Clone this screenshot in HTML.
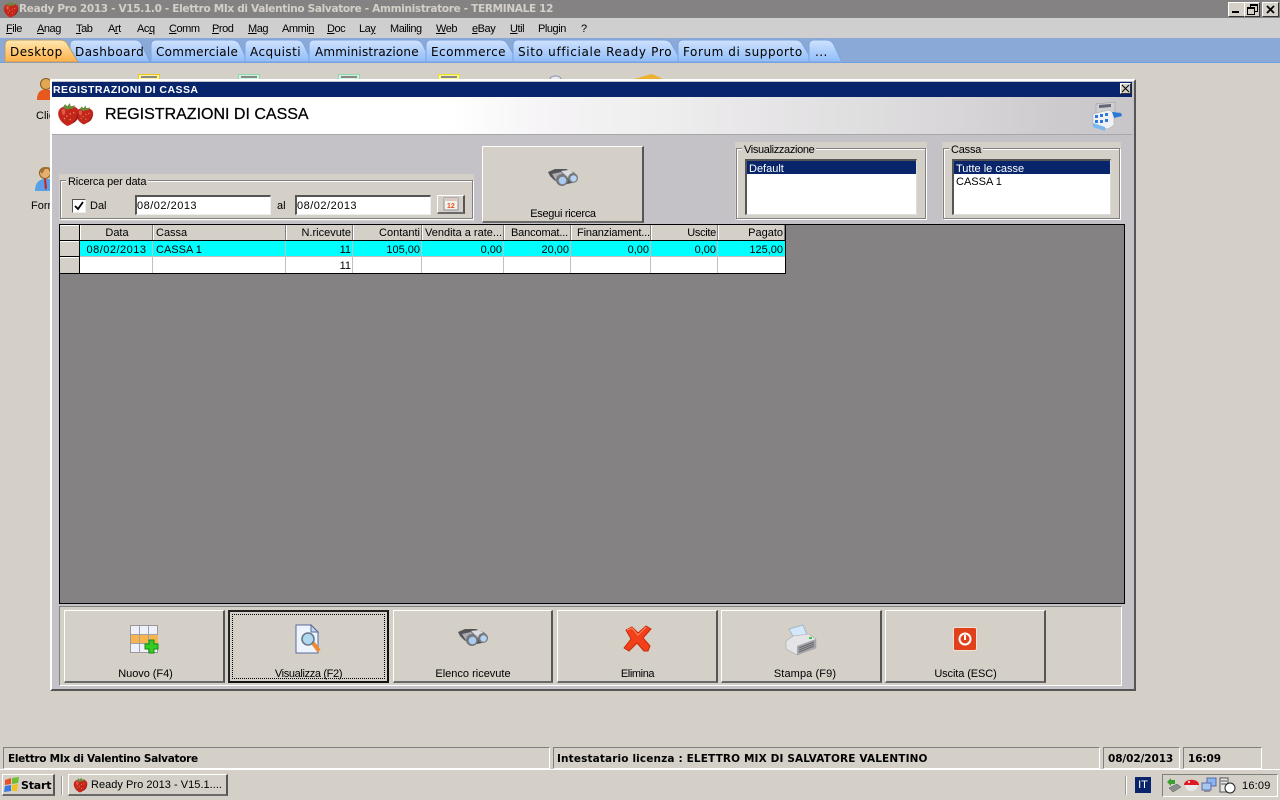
<!DOCTYPE html>
<html><head><meta charset="utf-8"><title>Ready Pro 2013</title>
<style>
html,body{margin:0;padding:0;width:1280px;height:800px;overflow:hidden;background:#d4d0c8}
body{position:relative;font-family:"Liberation Sans",sans-serif;font-size:11px;color:#000}
.a,.t{position:absolute}
.t{white-space:nowrap;line-height:13px}
.r{text-align:right}
.c{text-align:center}
.m{font-size:11px;top:23px;letter-spacing:-.45px}
.tab{font-family:"DejaVu Sans",sans-serif;font-size:12px;top:45px;letter-spacing:.45px;line-height:15px}
.btn{position:absolute;background:#d4d0c8;border-top:1px solid #fff;border-left:1px solid #fff;border-right:2px solid #555;border-bottom:2px solid #6a6a6a;box-sizing:border-box}
.etch{position:absolute;box-sizing:border-box;border:1px solid #808080;box-shadow:inset 1px 1px 0 #fff,1px 1px 0 #fff}
.hc{position:absolute;top:225px;height:15px;background:#d4d0c8;border-right:1px solid #808080;border-left:1px solid #fff;box-sizing:border-box}
.list{position:absolute;background:#fff;box-sizing:border-box;border-top:2px solid #555;border-left:2px solid #555;border-right:1px solid #ddd;border-bottom:1px solid #ddd}
.sel{position:absolute;left:0;right:0;top:0;height:13px;background:#08246b}
.inp{position:absolute;background:#fff;box-sizing:border-box;border-top:2px solid #555;border-left:2px solid #555;border-right:1px solid #eee;border-bottom:1px solid #eee;height:20px;top:195px}
.st{position:absolute;top:747px;height:22px;box-sizing:border-box;border-top:1px solid #808080;border-left:1px solid #808080;border-right:1px solid #fff;border-bottom:1px solid #fff}
.b{font-weight:bold}
u{text-decoration:underline}
svg{position:absolute;overflow:visible}
</style></head><body>

<svg width="0" height="0" style="left:0;top:0"><defs>
<g id="berry"><path d="M10 3C16 2 20 5 19 10 18 15 13 19 9 20 5 18 1 14 1 9 1 5 5 2 10 3Z" fill="#c4261c"/><path d="M4 6C6 4 8 6 7 9 6 12 4 10 4 6Z" fill="#e4574a"/><path d="M13 18C16 15 18 12 18 8 20 13 16 17 13 18Z" fill="#8e1a14"/><path d="M5 4 7 1 9 3 11 0 12 3 16 2 14 5 11 5 9 6 7 5Z" fill="#6a8a3a"/><path d="M6 13h1v1H6zM11 9h1v1h-1zM14 8h1v1h-1zM11 14h1v1h-1zM8 11h1v1H8z" fill="#e8b060"/></g>
<g id="bino"><path d="M0 4 7 1 18 1 27 5 24 15 14 17 6 12 2 8Z" fill="#555558"/><path d="M4 6 13 4 18 9 9 14Z" fill="#aeaeb2"/><path d="M13 3 21 2 27 6 20 10Z" fill="#dcdce0"/><circle cx="14" cy="12" r="6" fill="#77787c"/><circle cx="25" cy="10" r="5" fill="#77787c"/><circle cx="14.500" cy="12.500" r="3.800" fill="#a9cdf2"/><circle cx="25.500" cy="10.500" r="3.200" fill="#b4d4f4"/></g>
</defs></svg>

<!-- app title bar -->
<div class="a" style="left:0;top:0;width:1280px;height:18px;background:#858284"></div>
<svg style="left:3px;top:1px" width="16" height="17" viewBox="0 0 20 20"><use href="#berry"/></svg>
<div class="t b" style="left:19px;top:2px;color:#d4d0c8;font-family:'DejaVu Sans',sans-serif;font-size:10.500px;letter-spacing:-.32px;line-height:14px">Ready Pro 2013 - V15.1.0 - Elettro MIx di Valentino Salvatore - Amministratore - TERMINALE 12</div>
<!-- window buttons -->
<div class="a" style="left:1228px;top:2px;width:15px;height:13px;background:#d4d0c8;border:1px solid;border-color:#fff #333 #333 #fff;box-sizing:content-box"><div class="a" style="left:3px;top:8px;width:7px;height:2px;background:#000"></div></div>
<div class="a" style="left:1244px;top:2px;width:14px;height:13px;background:#d4d0c8;border:1px solid;border-color:#fff #333 #333 #fff"><div class="a" style="left:5px;top:1px;width:6px;height:5px;border:1px solid #000;border-top-width:2px"></div><div class="a" style="left:2px;top:4px;width:6px;height:5px;border:1px solid #000;border-top-width:2px;background:#d4d0c8"></div></div>
<div class="a" style="left:1262px;top:2px;width:15px;height:13px;background:#d4d0c8;border:1px solid;border-color:#fff #333 #333 #fff"><svg style="left:3px;top:2px" width="9" height="9"><path d="M1 1 8 8M8 1 1 8" stroke="#000" stroke-width="1.800"/></svg></div>

<!-- menu -->
<div class="a" style="left:0;top:18px;width:1280px;height:20px;background:#cfcfcf"></div>
<div class="t m" style="left:6px"><u>F</u>ile</div>
<div class="t m" style="left:37px"><u>A</u>nag</div>
<div class="t m" style="left:76px"><u>T</u>ab</div>
<div class="t m" style="left:108px">A<u>r</u>t</div>
<div class="t m" style="left:137px">Ac<u>q</u></div>
<div class="t m" style="left:169px"><u>C</u>omm</div>
<div class="t m" style="left:212px"><u>P</u>rod</div>
<div class="t m" style="left:248px"><u>M</u>ag</div>
<div class="t m" style="left:282px">Ammi<u>n</u></div>
<div class="t m" style="left:327px"><u>D</u>oc</div>
<div class="t m" style="left:359px">La<u>y</u></div>
<div class="t m" style="left:390px">Mailing</div>
<div class="t m" style="left:436px"><u>W</u>eb</div>
<div class="t m" style="left:472px"><u>e</u>Bay</div>
<div class="t m" style="left:510px"><u>U</u>til</div>
<div class="t m" style="left:538px">Plugin</div>
<div class="t m" style="left:581px">?</div>

<!-- tab strip -->
<div class="a" style="left:0;top:38px;width:1280px;height:25px;background:#8aa9d6"></div>
<div class="a" style="left:0;top:62px;width:1280px;height:1px;background:#6f9fe0"></div>
<svg style="left:0;top:38px" width="860" height="25">
<defs>
<linearGradient id="bl" x1="0" y1="0" x2="0" y2="1"><stop offset="0" stop-color="#cfe2fc"/><stop offset="1" stop-color="#8fbcf9"/></linearGradient>
<linearGradient id="og" x1="0" y1="0" x2="0" y2="1"><stop offset="0" stop-color="#ffe8b0"/><stop offset="1" stop-color="#ffb048"/></linearGradient>
</defs>
<g fill="url(#bl)" stroke="#7ba3dc">
<path d="M70 24V7Q70 2 75 2H135Q140 2 142 7L150 24Z"/>
<path d="M151 24V7Q151 2 156 2H232Q238 2 240 7L248 24Z"/>
<path d="M245 24V7Q245 2 250 2H297Q302 2 304 7L312 24Z"/>
<path d="M309 24V7Q309 2 314 2H415Q421 2 423 7L431 24Z"/>
<path d="M426 24V7Q426 2 431 2H500Q506 2 508 7L518 24Z"/>
<path d="M513 24V7Q513 2 518 2H664Q670 2 672 7L682 24Z"/>
<path d="M678 24V7Q678 2 683 2H795Q801 2 803 7L813 24Z"/>
<path d="M809 24V7Q809 2 814 2H826Q832 2 834 7L842 24Z"/>
</g>
<path d="M5 24V7Q5 2 10 2H60Q66 2 68 7L78 24Z" fill="url(#og)" stroke="#b99b6e"/>
</svg>
<div class="t tab" style="left:10px">Desktop</div>
<div class="t tab" style="left:75px">Dashboard</div>
<div class="t tab" style="left:156px;letter-spacing:.27px">Commerciale</div>
<div class="t tab" style="left:250px">Acquisti</div>
<div class="t tab" style="left:315px;letter-spacing:.18px">Amministrazione</div>
<div class="t tab" style="left:431px">Ecommerce</div>
<div class="t tab" style="left:518px;letter-spacing:.67px">Sito ufficiale Ready Pro</div>
<div class="t tab" style="left:683px;letter-spacing:.57px">Forum di supporto</div>
<div class="t tab" style="left:815px">...</div>

<!-- desktop icons peeking -->
<svg style="left:36px;top:76px" width="16" height="26"><circle cx="10" cy="8" r="5.500" fill="#e0a850" stroke="#8a5a20"/><path d="M1 24C1 15 6 13 10 14L16 14V24Z" fill="#e8581c"/></svg>
<div class="t" style="left:36px;top:110px">Clienti</div>
<svg style="left:35px;top:166px" width="17" height="26"><circle cx="10" cy="7" r="5.500" fill="#e8b070" stroke="#8a5a20"/><path d="M5 5C5 0 15 0 16 3L10 3 7 8Z" fill="#a07030"/><path d="M0 25C0 15 6 13 10 13L17 13V25Z" fill="#5aa0e8"/><path d="M9 13h2l1 9-2 2Z" fill="#d02020"/></svg>
<div class="t" style="left:31px;top:200px">Fornitori</div>
<div class="a" style="left:138px;top:74px;width:22px;height:5px;box-sizing:border-box;border:1px solid #e8c820;border-bottom:0;background:#fdf3a0"><div style="margin:1px 2px 0;height:2px;background:#888"></div></div>
<div class="a" style="left:238px;top:74px;width:22px;height:5px;box-sizing:border-box;border:1px solid #90d8b0;border-bottom:0;background:#d0f0e0"><div style="margin:1px 2px 0;height:2px;background:#888"></div></div>
<div class="a" style="left:338px;top:74px;width:22px;height:5px;box-sizing:border-box;border:1px solid #90d8b0;border-bottom:0;background:#d0f0e0"><div style="margin:1px 2px 0;height:2px;background:#888"></div></div>
<div class="a" style="left:438px;top:74px;width:22px;height:5px;box-sizing:border-box;border:1px solid #e8e020;border-bottom:0;background:#fdf3a0"><div style="margin:1px 2px 0;height:2px;background:#888"></div></div>
<svg style="left:549px;top:74px" width="14" height="5"><path d="M1 5C2 1 11 1 12 5" fill="#e6e6ee" stroke="#8a90a8"/></svg>
<svg style="left:634px;top:73px" width="30" height="6"><path d="M0 6 14 2 18 1 29 6Z" fill="#eeb030"/></svg>

<!-- child window -->
<div class="a" style="left:50px;top:79px;width:1086px;height:612px;background:#c4c2c6;box-sizing:border-box;border-top:2px solid #fff;border-left:2px solid #fff;border-right:2px solid #555;border-bottom:2px solid #555"></div>
<div class="a" style="left:52px;top:82px;width:1080px;height:15px;background:#08246b"></div>
<div class="t b" style="left:53px;top:84px;color:#fff;font-size:10.500px;letter-spacing:.46px">REGISTRAZIONI DI CASSA</div>
<div class="a" style="left:1120px;top:83px;width:9px;height:9px;background:#d4d0c8;border:1px solid;border-color:#fff #333 #333 #fff"><svg style="left:1px;top:1px" width="7" height="7"><path d="M0 0 7 7M7 0 0 7" stroke="#000"/></svg></div>
<div class="a" style="left:52px;top:97px;width:1080px;height:37px;background:linear-gradient(90deg,#fff 0,#fff 400px,#f5f3f5 500px,#efefef 600px,#e8e6e8 700px,#e0dfe0 800px,#d8d6d8 900px,#cdcbcd 1000px,#c8c6c8 1080px)"></div>
<div class="a" style="left:52px;top:134px;width:1080px;height:1px;background:#a8a6a8"></div>
<svg style="left:57px;top:101px" width="37" height="27" viewBox="0 0 37 27"><g transform="translate(18,4.500) scale(.95)"><use href="#berry"/></g><g transform="translate(0,2) scale(1.150)"><use href="#berry"/></g></svg>
<div class="t" style="left:105px;top:106px;font-size:16px;line-height:18px;-webkit-text-stroke:.25px #000">REGISTRAZIONI DI CASSA</div>
<svg style="left:1091px;top:100px" width="32" height="32" viewBox="0 0 32 32"><path d="M5 4 24 2V12L5 14Z" fill="#cfcfd2" stroke="#999" stroke-width=".5"/><path d="M8 5 20 4V7L8 8Z" fill="#667"/><path d="M2 14 18 10 23 13V25L17 29 2 25Z" fill="#f0f1f5" stroke="#aaa" stroke-width=".5"/><path d="M4 15h3v3H4zM9 14h3v3H9zM14 13h3v3h-3zM4 20h3v3H4zM9 20h3v3H9zM14 19h3v3h-3z" fill="#2f7ad6"/><path d="M2 23 14 27V31L2 27Z" fill="#7ab8f0"/><path d="M21 12 30 13 31 16 23 18Z" fill="#2a78d8"/></svg>

<!-- ricerca group -->
<div class="a" style="left:59px;top:174px;width:415px;height:47px;background:#d4d0c8"></div>
<div class="etch" style="left:60px;top:180px;width:413px;height:39px"></div>
<div class="t" style="left:66px;top:176px;background:#d4d0c8;padding:0 2px 0 2px;letter-spacing:-.15px">Ricerca per data</div>
<div class="a" style="left:72px;top:199px;width:12px;height:12px;background:#fff;border-top:1px solid #555;border-left:1px solid #555;border-right:1px solid #eee;border-bottom:1px solid #eee"><svg style="left:1px;top:1px" width="10" height="10"><path d="M1 5 4 8 9 1" fill="none" stroke="#000" stroke-width="1.800"/></svg></div>
<div class="t" style="left:90px;top:200px">Dal</div>
<div class="inp" style="left:135px;width:136px"></div>
<div class="t" style="left:137px;top:200px;letter-spacing:.5px">08/02/2013</div>
<div class="t" style="left:277px;top:200px">al</div>
<div class="inp" style="left:295px;width:136px"></div>
<div class="t" style="left:297px;top:200px;letter-spacing:.5px">08/02/2013</div>
<div class="btn" style="left:437px;top:195px;width:28px;height:19px"></div>
<svg style="left:443px;top:197px" width="16" height="14"><rect x="1" y="1" width="14" height="12" fill="#f4f2ec" stroke="#8a8a9a"/><rect x="1" y="1" width="14" height="3" fill="#d8c8c0"/><text x="4" y="11" font-size="7" font-weight="bold" fill="#e85020" font-family="Liberation Sans">12</text></svg>

<!-- Esegui -->
<div class="btn" style="left:482px;top:146px;width:162px;height:77px"></div>
<svg style="left:548px;top:168px" width="30" height="20" viewBox="0 0 30 20"><use href="#bino"/></svg>
<div class="t c" style="left:482px;top:208px;width:162px;letter-spacing:-.3px">Esegui ricerca</div>

<!-- Visualizzazione -->
<div class="a" style="left:735px;top:142px;width:192px;height:78px;background:#d4d0c8"></div>
<div class="etch" style="left:736px;top:148px;width:190px;height:71px"></div>
<div class="t" style="left:742px;top:144px;background:#d4d0c8;padding:0 2px;letter-spacing:-.35px">Visualizzazione</div>
<div class="list" style="left:745px;top:159px;width:172px;height:56px"><div class="sel" style="top:0"></div></div>
<div class="t" style="left:749px;top:163px;color:#fff">Default</div>
<!-- Cassa -->
<div class="a" style="left:942px;top:142px;width:179px;height:78px;background:#d4d0c8"></div>
<div class="etch" style="left:943px;top:148px;width:177px;height:71px"></div>
<div class="t" style="left:949px;top:144px;background:#d4d0c8;padding:0 2px;letter-spacing:-.2px">Cassa</div>
<div class="list" style="left:952px;top:159px;width:159px;height:56px"><div class="sel"></div></div>
<div class="t" style="left:956px;top:163px;color:#fff">Tutte le casse</div>
<div class="t" style="left:956px;top:176px">CASSA 1</div>

<!-- grid -->
<div class="a" style="left:59px;top:224px;width:1066px;height:380px;background:#858284;box-sizing:border-box;border:1px solid #000"></div>
<div class="a" style="left:60px;top:225px;width:726px;height:49px;background:#000"></div>
<div class="a" style="left:60px;top:225px;width:19px;height:15px;background:#d4d0c8;border-top:1px solid #fff;box-sizing:border-box"></div>
<div class="a" style="left:60px;top:241px;width:19px;height:15px;background:#d4d0c8;border-top:1px solid #fff;box-sizing:border-box"></div>
<div class="a" style="left:60px;top:257px;width:19px;height:16px;background:#d4d0c8;border-top:1px solid #fff;box-sizing:border-box"></div>
<div class="a" style="left:80px;top:241px;width:705px;height:15px;background:#0ff"></div>
<div class="a" style="left:80px;top:256px;width:705px;height:1px;background:#c0c0c0"></div>
<div class="a" style="left:80px;top:257px;width:705px;height:16px;background:#fff"></div>
<div class="hc" style="left:80px;width:73px"></div>
<div class="hc" style="left:153px;width:133px"></div>
<div class="hc" style="left:286px;width:67px"></div>
<div class="hc" style="left:353px;width:69px"></div>
<div class="hc" style="left:422px;width:82px"></div>
<div class="hc" style="left:504px;width:67px"></div>
<div class="hc" style="left:571px;width:80px"></div>
<div class="hc" style="left:651px;width:67px"></div>
<div class="hc" style="left:718px;width:67px"></div>
<div class="a" style="left:152px;top:241px;width:1px;height:32px;background:#c0c0c0"></div>
<div class="a" style="left:285px;top:241px;width:1px;height:32px;background:#c0c0c0"></div>
<div class="a" style="left:352px;top:241px;width:1px;height:32px;background:#c0c0c0"></div>
<div class="a" style="left:421px;top:241px;width:1px;height:32px;background:#c0c0c0"></div>
<div class="a" style="left:503px;top:241px;width:1px;height:32px;background:#c0c0c0"></div>
<div class="a" style="left:570px;top:241px;width:1px;height:32px;background:#c0c0c0"></div>
<div class="a" style="left:650px;top:241px;width:1px;height:32px;background:#c0c0c0"></div>
<div class="a" style="left:717px;top:241px;width:1px;height:32px;background:#c0c0c0"></div>

<div class="t c" style="left:81px;top:227px;width:72px">Data</div>
<div class="t" style="left:156px;top:227px">Cassa</div>
<div class="t r" style="left:286px;top:227px;width:65px">N.ricevute</div>
<div class="t r" style="left:353px;top:227px;width:67px">Contanti</div>
<div class="t" style="left:425px;top:227px">Vendita a rate...</div>
<div class="t" style="left:511px;top:227px;letter-spacing:-.15px">Bancomat...</div>
<div class="t" style="left:577px;top:227px;letter-spacing:-.15px">Finanziament...</div>
<div class="t r" style="left:651px;top:227px;width:65px;letter-spacing:-.3px">Uscite</div>
<div class="t r" style="left:718px;top:227px;width:65px">Pagato</div>

<div class="t c" style="left:80px;top:244px;width:73px;letter-spacing:.5px">08/02/2013</div>
<div class="t" style="left:156px;top:244px">CASSA 1</div>
<div class="t r" style="left:286px;top:244px;width:65px">11</div>
<div class="t r" style="left:353px;top:244px;width:67px">105,00</div>
<div class="t r" style="left:422px;top:244px;width:80px">0,00</div>
<div class="t r" style="left:504px;top:244px;width:65px">20,00</div>
<div class="t r" style="left:571px;top:244px;width:78px">0,00</div>
<div class="t r" style="left:651px;top:244px;width:65px">0,00</div>
<div class="t r" style="left:718px;top:244px;width:65px">125,00</div>
<div class="t r" style="left:286px;top:260px;width:65px">11</div>

<!-- bottom panel -->
<div class="a" style="left:59px;top:606px;width:1063px;height:80px;background:#d4d0c8;box-sizing:border-box;border-top:1px solid #808080;border-left:1px solid #808080;border-right:1px solid #fff;border-bottom:1px solid #fff"></div>
<div class="btn" style="left:64px;top:610px;width:161px;height:73px"></div>
<div class="a" style="left:228px;top:610px;width:161px;height:73px;background:#d4d0c8;box-sizing:border-box;border:2px solid #111;border-top-color:#222;border-left-color:#222"></div>
<div class="a" style="left:232px;top:614px;width:153px;height:65px;box-sizing:border-box;border:1px dotted #000"></div>
<div class="btn" style="left:393px;top:610px;width:160px;height:73px"></div>
<div class="btn" style="left:557px;top:610px;width:161px;height:73px"></div>
<div class="btn" style="left:721px;top:610px;width:161px;height:73px"></div>
<div class="btn" style="left:885px;top:610px;width:161px;height:73px"></div>

<div class="t c" style="left:64px;top:668px;width:163px;letter-spacing:-.05px">Nuovo (F4)</div>
<div class="t c" style="left:228px;top:668px;width:161px;letter-spacing:-.35px">Visualizza (F2)</div>
<div class="t c" style="left:393px;top:668px;width:160px">Elenco ricevute</div>
<div class="t c" style="left:557px;top:668px;width:161px;letter-spacing:-.4px">Elimina</div>
<div class="t c" style="left:721px;top:668px;width:168px;letter-spacing:.1px">Stampa (F9)</div>
<div class="t c" style="left:885px;top:668px;width:161px;letter-spacing:-.1px">Uscita (ESC)</div>

<!-- Nuovo icon -->
<svg style="left:130px;top:625px" width="30" height="30" viewBox="0 0 30 30">
<rect x=".5" y=".5" width="27" height="27" fill="#eef0fb" stroke="#999"/>
<rect x="1" y="10" width="27" height="8" fill="#f9b44f"/>
<path d="M9.500 1V28M18.500 1V28M1 9.500H28M1 18.500H28" stroke="#a0a0a8" fill="none"/>
<path d="M19 15h5v4h4v5h-4v4h-5v-4h-4v-5h4Z" fill="#33cc22" stroke="#1a8a12"/>
</svg>
<!-- Visualizza icon -->
<svg style="left:295px;top:624px" width="28" height="32" viewBox="0 0 28 32">
<path d="M1 1H16L23 8V29H1Z" fill="#eef4fd" stroke="#5a6a9a"/>
<path d="M16 1V8H23Z" fill="#c4d6ee" stroke="#5a6a9a"/>
<path d="M18 19 24 27" stroke="#f08a30" stroke-width="4"/>
<circle cx="13" cy="15" r="6" fill="#b0d8ee" stroke="#6a7a88" stroke-width="1.600"/>
</svg>
<!-- Elenco icon -->
<svg style="left:458px;top:628px" width="30" height="20" viewBox="0 0 30 20"><use href="#bino"/></svg>
<!-- Elimina icon -->
<svg style="left:623px;top:625px" width="29" height="28" viewBox="0 0 29 28">
<path d="M3 5 9 2 15 8 23 1 28 4 20 13 27 21 25 26 21 26 14 18 6 26 1 23 8 14Z" fill="#f2401a" stroke="#c82a0c" stroke-linejoin="round"/>
<path d="M4 5 9 3 15 10 23 2" fill="none" stroke="#ff8a60"/>
</svg>
<!-- Stampa icon -->
<svg style="left:785px;top:624px" width="32" height="32" viewBox="0 0 32 32">
<path d="M4 5 18 1 23 13 10 16Z" fill="#d4e8fb" stroke="#a8b8c8"/>
<path d="M1 17 8 12 24 10 31 15V24L12 31 1 25Z" fill="#e4e4e6" stroke="#a8a8aa" stroke-width=".6"/>
<path d="M12 22 31 15V24L12 31Z" fill="#a4a4a8"/>
<path d="M14 24 29 18M14 26 29 20M14 28 29 22" stroke="#66666c"/>
<rect x="24" y="13" width="3" height="2" fill="#33cc44"/>
</svg>
<!-- Uscita icon -->
<svg style="left:953px;top:627px" width="24" height="24" viewBox="0 0 24 24">
<rect x=".5" y=".5" width="23" height="23" rx="2" fill="#e0401a" stroke="#f4e0d8"/>
<circle cx="12" cy="12" r="5.500" fill="none" stroke="#fff" stroke-width="2"/>
<path d="M12 8V13" stroke="#fff" stroke-width="2"/>
</svg>

<!-- status bar -->
<div class="st" style="left:3px;width:547px"></div>
<div class="st" style="left:553px;width:547px"></div>
<div class="st" style="left:1103px;width:77px"></div>
<div class="st" style="left:1183px;width:79px"></div>
<div class="t b" style="left:8px;top:753px;font-family:'DejaVu Sans',sans-serif;font-size:10.500px;letter-spacing:-.3px">Elettro MIx di Valentino Salvatore</div>
<div class="t b" style="left:557px;top:753px;font-family:'DejaVu Sans',sans-serif;font-size:10.500px;letter-spacing:.14px">Intestatario licenza : ELETTRO MIX DI SALVATORE VALENTINO</div>
<div class="t b" style="left:1108px;top:753px;font-family:'DejaVu Sans',sans-serif;font-size:10.500px;letter-spacing:-.1px">08/02/2013</div>
<div class="t b" style="left:1188px;top:753px;font-family:'DejaVu Sans',sans-serif;font-size:10.500px;letter-spacing:-.1px">16:09</div>

<!-- taskbar -->
<div class="a" style="left:0;top:769px;width:1280px;height:1px;background:#fff"></div>
<div class="btn" style="left:2px;top:774px;width:53px;height:22px"></div>
<svg style="left:4px;top:777px" width="16" height="15"><path d="M1 3 7 1 7 7 1 8Z" fill="#e8502a"/><path d="M8 1 15 0 14 6 8 7Z" fill="#6cc030"/><path d="M1 9 7 8 7 14 0 15Z" fill="#3a7ae0"/><path d="M8 8 14 7 13 14 8 14Z" fill="#f2c020"/></svg>
<div class="t b" style="left:21px;top:779px;font-family:'DejaVu Sans',sans-serif;font-size:11px;letter-spacing:-.2px">Start</div>
<div class="a" style="left:61px;top:776px;width:1px;height:19px;background:#9a9a9a;border-right:1px solid #fff"></div>
<div class="btn" style="left:68px;top:774px;width:160px;height:22px"></div>
<svg style="left:73px;top:777px" width="15" height="16" viewBox="0 0 20 20"><use href="#berry"/></svg>
<div class="t" style="left:91px;top:779px;letter-spacing:.03px">Ready Pro 2013 - V15.1....</div>
<div class="a" style="left:1125px;top:776px;width:1px;height:19px;background:#9a9a9a;border-right:1px solid #fff"></div>
<div class="a" style="left:1135px;top:777px;width:16px;height:16px;background:#08246b"></div>
<div class="t c" style="left:1135px;top:779px;width:16px;color:#fff">IT</div>
<div class="a" style="left:1162px;top:774px;width:116px;height:23px;box-sizing:border-box;border-top:1px solid #808080;border-left:1px solid #808080;border-right:1px solid #fff;border-bottom:1px solid #fff"></div>
<svg style="left:1166px;top:777px" width="16" height="16"><path d="M1 5 5 1V3H9V7H5V9Z" fill="#3aa030"/><path d="M3 11 11 7 15 10 7 15Z" fill="#8a9090" stroke="#555" stroke-width=".5"/></svg>
<svg style="left:1183px;top:777px" width="17" height="15"><path d="M1 8C1 1 16 1 16 8Z" fill="#e01820"/><path d="M2 8H15C14 13 11 14 8 14 5 14 3 13 2 8Z" fill="#e8e8e8"/><circle cx="6" cy="5" r="1" fill="#fff"/></svg>
<svg style="left:1201px;top:777px" width="16" height="16"><rect x="6" y="1" width="9" height="8" fill="#8ab4ee" stroke="#5a6aa8"/><rect x="1" y="6" width="9" height="7" fill="#a8c8f0" stroke="#5a6aa8"/><rect x="3" y="13" width="6" height="2" fill="#8a8aa0"/></svg>
<svg style="left:1219px;top:777px" width="17" height="17"><rect x="1" y="1" width="8" height="14" fill="#e8e8e8" stroke="#555"/><path d="M2 4H8M2 7H8" stroke="#555"/><circle cx="11" cy="11" r="5" fill="#fff" stroke="#222"/></svg>
<div class="t" style="left:1242px;top:780px;letter-spacing:.2px">16:09</div>
</body></html>
